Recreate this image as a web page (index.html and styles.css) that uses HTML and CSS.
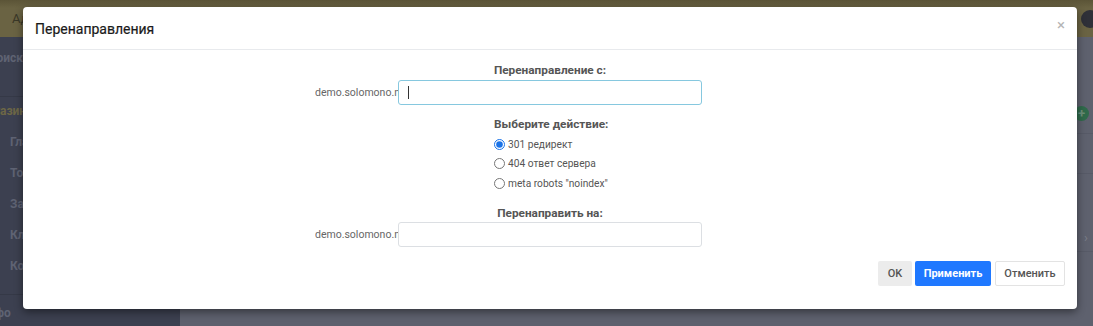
FILE: index.html
```html
<!DOCTYPE html>
<html lang="ru">
<head>
<meta charset="utf-8">
<title>Перенаправления</title>
<link rel="stylesheet" href="styles.css">
</head>
<body>
<div class="app">
  <header class="topbar">
    <span class="topbar-title">Ад</span>
    <span class="avatar"></span>
  </header>
  <div class="workspace">
    <aside class="sidebar">
      <div class="side-search">Поиск</div>
      <div class="side-group">Магазин</div>
      <ul class="side-menu">
        <li>Главная</li>
        <li>Товары</li>
        <li>Заказы</li>
        <li>Клиенты</li>
        <li>Контент</li>
      </ul>
      <div class="side-bottom">Инфо</div>
    </aside>
    <main class="main">
      <div class="main-row main-row-first"><span class="add-btn">+</span></div>
      <div class="main-row"></div>
      <div class="main-row main-row-arrow"><span class="chev">›</span></div>
    </main>
  </div>

  <div class="modal">
    <div class="modal-header">
      <h1 class="modal-title">Перенаправления</h1>
      <span class="modal-close">×</span>
    </div>
    <div class="modal-body">
      <div class="form-grid">
        <div class="field-title first">Перенаправление с:</div>
        <div class="prefix">demo.solomono.net/</div>
        <div class="input-wrap focused"><input class="text-input" type="text"></div>

        <div class="action-block">
          <div class="actions">
            <div class="field-title left">Выберите действие:</div>
            <label class="radio-row"><input type="radio" name="act" checked><span>301 редирект</span></label>
            <label class="radio-row"><input type="radio" name="act"><span>404 ответ сервера</span></label>
            <label class="radio-row"><input type="radio" name="act"><span>meta robots "noindex"</span></label>
          </div>
        </div>

        <div class="field-title second">Перенаправить на:</div>
        <div class="prefix">demo.solomono.net/</div>
        <div class="input-wrap"><input class="text-input" type="text"></div>
      </div>
    </div>
    <div class="modal-footer">
      <button class="btn btn-ok">OK</button>
      <button class="btn btn-primary">Применить</button>
      <button class="btn btn-cancel">Отменить</button>
    </div>
  </div>
</div>
</body>
</html>
```

FILE: styles.css
```css
* { box-sizing: border-box; }
html, body { margin: 0; padding: 0; }
body {
  font-family: Roboto, "Liberation Sans", Arial, sans-serif;
  width: 1093px;
  height: 326px;
  overflow: hidden;
  background: #5e616e;
}
.app {
  position: relative;
  width: 1093px;
  height: 326px;
  display: grid;
  grid-template-rows: 37px 1fr;
}
.topbar {
  background: linear-gradient(#5b5437 0, #6a6343 8px, #6a6343 100%);
  display: flex;
  align-items: center;
  justify-content: space-between;
  padding: 0 0 0 12px;
}
.topbar-title { color: #3a3828; font-size: 13px; }
.avatar {
  width: 18px; height: 18px; border-radius: 50%;
  background: #2f3038; margin-right: -6px;
}
.workspace { display: flex; min-height: 0; }
.sidebar {
  width: 180px;
  background: #3c4050;
  color: #5f6373;
  font-size: 12px;
  font-weight: 700;
  display: flex;
  flex-direction: column;
  overflow: hidden;
}
.side-search { padding: 14px 0 0 0; margin-left: -12px; height: 60px; border-bottom: 1px solid #353947; }
.side-group { color: #6d6746; margin-left: -22px; padding-top: 7px; height: 30px; }
.side-menu { list-style: none; margin: 0; padding: 0 0 0 10px; }
.side-menu li { height: 31px; line-height: 31px; }
.side-bottom { margin-top: auto; height: 32px; border-top: 1px solid #353947; margin-left: -20px; padding-top: 11px; }
.main { flex: 1; display: flex; flex-direction: column; }
.main-row { height: 40px; border-bottom: 1px solid #575a67; display: flex; justify-content: flex-end; align-items: center; }
.main-row-first { margin-top: 57px; }
.main-row-arrow { margin-top: 50px; height: 28px; }
.add-btn {
  width: 15px; height: 15px; border-radius: 50%;
  background: #2f6a4b; color: #6a8f7a; font-size: 13px; font-weight: 700;
  display: flex; align-items: center; justify-content: center; margin-right: 4px;
}
.chev { color: #7a7d88; font-size: 13px; margin-right: 5px; }

/* modal */
.modal {
  position: absolute;
  left: 23px;
  top: 7px;
  width: 1054px;
  height: 302px;
  background: #fff;
  border-radius: 4px;
  box-shadow: 0 3px 8px rgba(0,0,0,0.45);
  display: flex;
  flex-direction: column;
}
.modal-header {
  height: 43px;
  border-bottom: 1px solid #e8eaed;
  display: flex;
  align-items: center;
  justify-content: space-between;
  padding: 0 12px 0 12px;
}
.modal-title {
  margin: 0;
  font-size: 14px;
  font-weight: 400;
  color: #1a1a1a;
  padding-top: 1px;
  -webkit-text-stroke: 0.2px #1a1a1a;
}
.modal-close { color: #b5b5b5; font-size: 15px; margin-right: 0; margin-top: -6px; }
.modal-body { padding-top: 12px; }
.form-grid {
  display: grid;
  grid-template-columns: 1fr 304px 1fr;
  align-items: center;
}
.field-title {
  grid-column: 2;
  text-align: center;
  font-size: 11.8px;
  font-weight: 700;
  color: #555;
  line-height: 16px;
}
.field-title.first { margin-bottom: 2px; }
.field-title.second { margin-top: 12px; margin-bottom: 1px; }
.field-title.left { text-align: left; margin-bottom: 2px; }
.prefix {
  grid-column: 1;
  justify-self: end;
  width: 83px;
  overflow: hidden;
  white-space: nowrap;
  font-size: 10.5px;
  color: #666;
}
.input-wrap { grid-column: 2; position: relative; }
.text-input {
  display: block;
  width: 304px;
  height: 25px;
  border: 1px solid #dcdfe3;
  border-radius: 3px;
  outline: none;
  padding: 0 10px;
  font: inherit;
  background: #fff;
}
.focused .text-input { border-color: #86c8df; }
.focused::after {
  content: "";
  position: absolute;
  left: 10px;
  top: 6px;
  width: 1px;
  height: 13px;
  background: #333;
}
.action-block { grid-column: 2; display: flex; justify-content: flex-start; padding-left: 96px; margin-top: 11px; }
.actions { display: flex; flex-direction: column; }
.radio-row {
  display: flex;
  align-items: center;
  height: 19.5px;
  font-size: 10.2px;
  color: #555;
  padding-top: 1px;
}
.radio-row input {
  width: 11px; height: 11px; margin: 0 3px 0 0;
  accent-color: #1a73e8;
}
.modal-footer {
  display: flex;
  justify-content: flex-end;
  gap: 3px;
  padding: 14px 12px 0 0;
}
.btn {
  height: 25px;
  border: 1px solid transparent;
  border-radius: 2px;
  font-family: inherit;
  font-size: 11px;
  font-weight: 500;
  padding: 0;
  cursor: pointer;
}
.btn-ok { background: #ececec; color: #555; width: 34px; }
.btn-primary { background: #1f78ff; color: #fff; font-weight: 700; width: 76px; }
.btn-cancel { background: #fff; border-color: #e3e3e3; color: #555; width: 70px; margin-left: 1px; }
```
